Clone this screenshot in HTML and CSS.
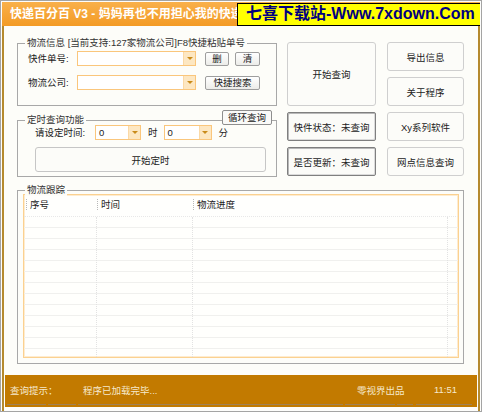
FILE: index.html
```html
<!DOCTYPE html>
<html lang="zh-CN">

<head>
  <meta charset="UTF-8">
  <title>快递百分百 V3</title>
  <link rel="stylesheet" href="styles.css">
</head>

<body>
  <div class="window">
    <div class="titlebar">
      <span class="title">快递百分百 V3 - 妈妈再也不用担心我的快递了吧</span>
      <div class="watermark">七喜下载站-Www.7xdown.Com</div>
    </div>

    <div class="frame">
      <div class="client">
        <div class="top">
          <div class="left">
            <!-- 物流信息 -->
            <div class="group info">
              <span class="group-title">物流信息 [当前支持:127家物流公司]F8快捷粘贴单号</span>
              <div class="row">
                <span class="label">快件单号:</span>
                <div class="combo wide"><span class="combo-text"></span><span class="drop"></span></div>
                <button class="mini del">删</button>
                <button class="mini clear">清</button>
              </div>
              <div class="row">
                <span class="label">物流公司:</span>
                <div class="combo wide"><span class="combo-text"></span><span class="drop"></span></div>
                <button class="mini search">快捷搜索</button>
              </div>
            </div>

            <!-- 定时查询 -->
            <div class="group timer">
              <span class="group-title">定时查询功能</span>
              <button class="mini loop">循环查询</button>
              <div class="row">
                <span class="label time-label">请设定时间:</span>
                <div class="combo small"><span class="combo-text">0</span><span class="drop"></span></div>
                <span class="unit">时</span>
                <div class="combo small second"><span class="combo-text">0</span><span class="drop"></span></div>
                <span class="unit">分</span>
              </div>
              <button class="btn start-timer">开始定时</button>
            </div>
          </div>

          <div class="actions">
            <button class="btn start">开始查询</button>
            <button class="btn">导出信息</button>
            <button class="btn">关于程序</button>
            <div class="state">快件状态：未查询</div>
            <button class="btn">Xy系列软件</button>
            <div class="state">是否更新：未查询</div>
            <button class="btn">网点信息查询</button>
          </div>
        </div>

        <!-- 物流跟踪 -->
        <div class="group track">
          <span class="group-title">物流跟踪</span>
          <div class="list">
            <div class="list-head">
              <span class="col c1">序号</span>
              <span class="col c2">时间</span>
              <span class="col c3">物流进度</span>
            </div>
            <div class="list-body">
              <span class="col c1"></span>
              <span class="col c2"></span>
              <span class="col c3"></span>
            </div>
          </div>
        </div>
      </div>

      <div class="statusbar">
        <span class="panel p1">查询提示：</span>
        <span class="panel p2"></span>
        <span class="panel p3">程序已加载完毕...</span>
        <span class="panel p4">零视界出品</span>
        <span class="panel p5"></span>
        <span class="panel p6">11:51</span>
      </div>
    </div>
  </div>
</body>

</html>
```

FILE: styles.css
```css
body {
  margin: 0;
  font-family: "Liberation Sans", "Noto Sans CJK SC", sans-serif;
  font-size: 9.5px;
  color: #222;
}

.window {
  width: 482px;
  height: 412px;
  box-sizing: border-box;
  border: 1px solid #a4a4a4;
  padding: 1px 1px 0;
  background: #fdfdfb;
  display: flex;
  flex-direction: column;
}

/* title bar */
.titlebar {
  height: 24px;
  flex: none;
  position: relative;
  display: flex;
  align-items: center;
  padding-left: 8px;
  background: linear-gradient(#f9b04a, #f39b25);
  overflow: hidden;
}

.title {
  color: #fff;
  font-size: 12px;
  font-weight: bold;
  white-space: nowrap;
  line-height: 14px;
}

.watermark {
  position: absolute;
  left: 235px;
  top: 1px;
  right: -1px;
  height: 23px;
  box-sizing: border-box;
  border: 1px solid #000;
  background: #ffff00;
  color: #000080;
  font-weight: bold;
  font-size: 16px;
  line-height: 20px;
  padding-left: 8px;
  white-space: nowrap;
}

.frame {
  flex: 1;
  border-left: 2px solid #b58a2e;
  border-right: 2px solid #b58a2e;
  padding-bottom: 4px;
  display: flex;
  flex-direction: column;
}

.client {
  height: 349px;
  box-sizing: border-box;
  padding: 17px 0 0 13px;
  background: #fdfdf9;
}

.top {
  display: flex;
  gap: 10px;
}

.left {
  width: 260px;
  display: flex;
  flex-direction: column;
  gap: 14px;
}

/* group boxes */
.group {
  border: 1px solid #a8a8a8;
  position: relative;
  box-sizing: border-box;
}

.group-title {
  position: absolute;
  top: -7px;
  left: 7px;
  padding: 0 2px;
  background: #fdfdf9;
  color: #333;
  line-height: 12px;
  white-space: nowrap;
}

.info {
  height: 63px;
  padding: 7px 0 0 10px;
  display: flex;
  flex-direction: column;
  gap: 9px;
}

.row {
  display: flex;
  align-items: center;
  height: 15px;
}

.label {
  width: 49px;
  flex: none;
  line-height: 12px;
  white-space: nowrap;
}

.combo {
  height: 15px;
  flex: none;
  box-sizing: border-box;
  border: 1px solid #fac67c;
  background: #fff;
  display: flex;
  justify-content: space-between;
}

.combo.wide {
  width: 119px;
}

.combo.small {
  width: 46px;
}

.combo.second {
  width: 48px;
}

.combo-text {
  padding-left: 3px;
  line-height: 13px;
}

.drop {
  width: 11px;
  background: #fde7c2;
  border-left: 1px solid #fbd9a6;
  display: flex;
  align-items: center;
  justify-content: center;
}

.drop::after {
  content: "";
  border-left: 3px solid transparent;
  border-right: 3px solid transparent;
  border-top: 3px solid #c98b1a;
}

.mini {
  height: 14px;
  padding: 0;
  border: 1px solid #9e9e9e;
  border-radius: 2px;
  background: linear-gradient(#ffffff, #ecece9);
  font-family: inherit;
  font-size: 9.5px;
  line-height: 12px;
  color: #222;
}

.del {
  width: 24px;
  margin-left: 9px;
}

.clear {
  width: 25px;
  margin-left: 6px;
}

.search {
  width: 55px;
  margin-left: 9px;
}

.timer {
  height: 57px;
  padding: 4px 0 0 17px;
}

.time-label {
  width: 60px;
}

.unit {
  margin: 0 6px 0 7px;
  line-height: 12px;
}

.loop {
  position: absolute;
  top: -11px;
  right: 4px;
  width: 50px;
  height: 15px;
  border-color: #8e8e8e;
  background: #fafaf8;
}

/* push buttons */
.btn {
  border: 1px solid #cfcfcf;
  border-radius: 3px;
  background: #fcfcf9;
  font-family: inherit;
  font-size: 9.5px;
  color: #222;
  padding: 0;
}

.start-timer {
  display: block;
  margin-top: 7px;
  width: 231px;
  height: 25px;
  border-color: #c6c6c6;
}

.actions {
  display: grid;
  grid-template-columns: 89px 77px;
  grid-template-rows: repeat(4, 29px);
  column-gap: 11px;
  row-gap: 6px;
  margin-top: -1px;
}

.start {
  grid-row: 1 / 3;
}

.state {
  border: 1px solid #7f7f7f;
  border-radius: 2px;
  box-shadow: inset 1px 1px 0 #b8b8b8, inset -1px -1px 0 #dadada;
  background: #fbfbf8;
  display: flex;
  align-items: center;
  justify-content: center;
  white-space: nowrap;
}

/* tracking list */
.track {
  margin-top: 13px;
  width: 447px;
  height: 174px;
  padding: 3px 4px 0 5px;
}

.list {
  width: 436px;
  height: 164px;
  box-sizing: border-box;
  border: 1px solid #fbd190;
  box-shadow: inset 0 0 0 1px #feecd0;
  background: #fffffd;
  display: flex;
  flex-direction: column;
}

.list-head {
  height: 21px;
  display: flex;
  padding-left: 2px;
  border-bottom: 1px dotted #e8e8e8;
}

.list-head .col {
  height: 11px;
  margin-top: 4px;
  border-left: 1px dotted #b8b8b8;
  padding-left: 3px;
  line-height: 11px;
  box-sizing: border-box;
}

.list-head .c1 {
  width: 71px;
}

.list-head .c2 {
  width: 96px;
}

.list-head .c3 {
  width: 255px;
}

.list-body {
  flex: 1;
  display: flex;
  background: repeating-linear-gradient(to bottom, transparent 0 10px, #f0f0ee 10px 11px);
}

.list-body .col {
  border-right: 1px dotted #e2e2e2;
}

.list-body .c1 {
  width: 72px;
}

.list-body .c2 {
  width: 95px;
}

.list-body .c3 {
  width: 254px;
}

/* status bar */
.statusbar {
  height: 32px;
  margin: 0 1px;
  background: #c27a00;
  color: #f6e9cc;
  display: flex;
  padding-left: 2px;
}

.panel {
  height: 30px;
  box-sizing: border-box;
  border-bottom: 1px solid #a08258;
  margin-right: 2px;
  display: flex;
  align-items: center;
  white-space: nowrap;
}

.p1 {
  width: 39px;
  padding-left: 3px;
}

.p2 {
  width: 28px;
}

.p3 {
  width: 265px;
  padding-left: 5px;
}

.p4 {
  width: 50px;
  padding-left: 12px;
}

.p5 {
  width: 16px;
  margin-right: 3px;
}

.p6 {
  width: 56px;
  padding-left: 18px;
}
```
